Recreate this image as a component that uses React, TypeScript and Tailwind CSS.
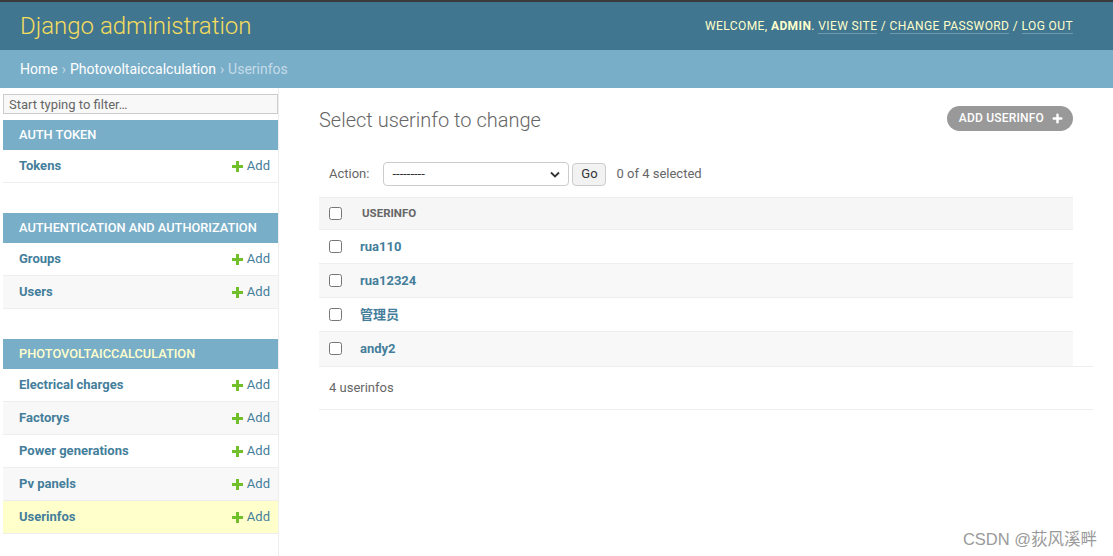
import { Plus } from "lucide-react";

const sections = [
  { name: "Auth Token", current: false, models: ["Tokens"] },
  { name: "Authentication and Authorization", current: false, models: ["Groups", "Users"] },
  {
    name: "Photovoltaiccalculation",
    current: true,
    models: ["Electrical charges", "Factorys", "Power generations", "Pv panels", "Userinfos"],
  },
];

const rows = ["rua110", "rua12324", "管理员", "andy2"];

function AddLink() {
  return (
    <span className="flex items-center gap-[4px] text-[13px] text-[#447e9b]">
      <svg width="11" height="11" viewBox="0 0 11 11">
        <rect x="4" y="0" width="3" height="11" fill="#70bf2b" />
        <rect x="0" y="4" width="11" height="3" fill="#70bf2b" />
      </svg>
      Add
    </span>
  );
}

export default function App() {
  return (
    <div
      className="relative min-h-screen bg-white text-[#333] overflow-hidden"
      style={{ fontFamily: 'Roboto, "Noto Sans CJK SC", sans-serif' }}
    >
      {/* Header */}
      <div className="h-[2px] bg-[#3a3a3a]" />
      <header className="h-[48px] bg-[#417690] flex items-center justify-between px-[20px]">
        <h1 className="text-[24px] font-light text-[#f5dd5d] leading-none">Django administration</h1>
        <div className="text-[12px] uppercase tracking-[0.4px] text-[#ffc] pr-[20px]">
          Welcome, <strong className="font-bold">admin</strong>.{" "}
          <a className="border-b border-white/25">View site</a> /{" "}
          <a className="border-b border-white/25">Change password</a> /{" "}
          <a className="border-b border-white/25">Log out</a>
        </div>
      </header>
      <div className="h-[38px] bg-[#79aec8] flex items-center px-[20px] text-[14px] text-white">
        <span>Home</span>
        <span className="mx-[4px] text-[#c4dce8]">›</span>
        <span>Photovoltaiccalculation</span>
        <span className="mx-[4px] text-[#c4dce8]">›</span>
        <span className="text-[#c4dce8]">Userinfos</span>
      </div>

      <div className="flex min-h-[468px]">
        {/* Sidebar */}
        <nav className="w-[279px] shrink-0 border-r border-[#eee] pl-[3px] pt-[6px]">
          <input
            placeholder="Start typing to filter…"
            className="block w-[275px] h-[20px] border border-[#ccc] bg-[#f8f8f8] px-[5px] text-[13px] text-[#333] placeholder:text-[#666] outline-none"
          />
          {sections.map((s) => (
            <div key={s.name} className="mt-[6px] mb-[30px]">
              <div
                className={`h-[30px] bg-[#79aec8] flex items-center pl-[16px] text-[12.8px] font-medium uppercase ${
                  s.current ? "text-[#ffc]" : "text-white"
                }`}
              >
                {s.name}
              </div>
              {s.models.map((m, i) => (
                <div
                  key={m}
                  className={`h-[33px] flex items-center justify-between pl-[16px] pr-[8px] border-b border-[#eee] ${
                    m === "Userinfos" ? "bg-[#ffc]" : i % 2 === 1 ? "bg-[#f8f8f8]" : "bg-white"
                  }`}
                >
                  <span className="text-[13px] font-bold text-[#447e9b]">{m}</span>
                  <AddLink />
                </div>
              ))}
            </div>
          ))}
        </nav>

        {/* Content */}
        <main className="flex-1 pl-[40px] pr-[20px] pt-[17px]">
          <div className="flex items-center justify-between pr-[20px]">
            <h1 className="text-[20px] font-light text-[#666]">Select userinfo to change</h1>
            <a className="h-[25px] -mt-[4px] flex items-center gap-[7px] rounded-full bg-[#999] pl-[12px] pr-[9px] text-[12px] font-medium uppercase tracking-[0.2px] text-white">
              Add userinfo
              <Plus size={13} strokeWidth={4.5} />
            </a>
          </div>

          <div className="mt-[26px]">
            <div className="flex items-center h-[26px] pl-[10px] text-[13px] text-[#666] pr-[20px]">
              <span>Action:</span>
              <div className="ml-[14px] w-[186px] h-[24px] border border-[#ccc] rounded-[4px] flex items-center justify-between px-[8px]">
                <span className="text-[#333] text-[13px]">---------</span>
                <svg width="10" height="7" viewBox="0 0 10 7">
                  <path d="M1 1.5 L5 5.5 L9 1.5" stroke="#333" strokeWidth="1.8" fill="none" />
                </svg>
              </div>
              <span className="ml-[3px] h-[23px] w-[34px] flex items-center justify-center rounded-[4px] border border-[#ccc] bg-[#f2f2f2] text-[#333] text-[13px]">
                Go
              </span>
              <span className="ml-[10px]">0 of 4 selected</span>
            </div>

            <div className="mt-[10px]">
              <table className="w-[754px] border-collapse text-[13px]">
                <thead>
                  <tr className="h-[32px] bg-[#f6f6f6] border-t border-[#eee]">
                    <th className="w-[40px] pl-[10px] text-left">
                      <input type="checkbox" className="block w-[13px] h-[13px]" />
                    </th>
                    <th className="text-left text-[11.5px] font-bold uppercase text-[#666] pl-[3px]">Userinfo</th>
                  </tr>
                </thead>
                <tbody>
                  {rows.map((r, i) => (
                    <tr
                      key={r}
                      className={`h-[34px] border-t border-[#eee] ${i % 2 === 1 ? "bg-[#f8f8f8]" : "bg-white"}`}
                    >
                      <td className="pl-[10px]">
                        <input type="checkbox" className="block w-[13px] h-[13px]" />
                      </td>
                      <td className="font-bold text-[#447e9b] pl-[1px]">{r}</td>
                    </tr>
                  ))}
                </tbody>
              </table>
              <div className="h-[44px] flex items-center pl-[10px] text-[13px] text-[#666] border-t border-b border-[#eee]">
                4 userinfos
              </div>
            </div>
          </div>
        </main>
      </div>

      <div
        className="absolute right-[16px] bottom-[12px] text-[16.5px] text-[#9a9a9a]"
        style={{ fontFamily: '"Liberation Sans", "Noto Sans CJK SC", sans-serif' }}
      >
        CSDN @荻风溪畔
      </div>
    </div>
  );
}
